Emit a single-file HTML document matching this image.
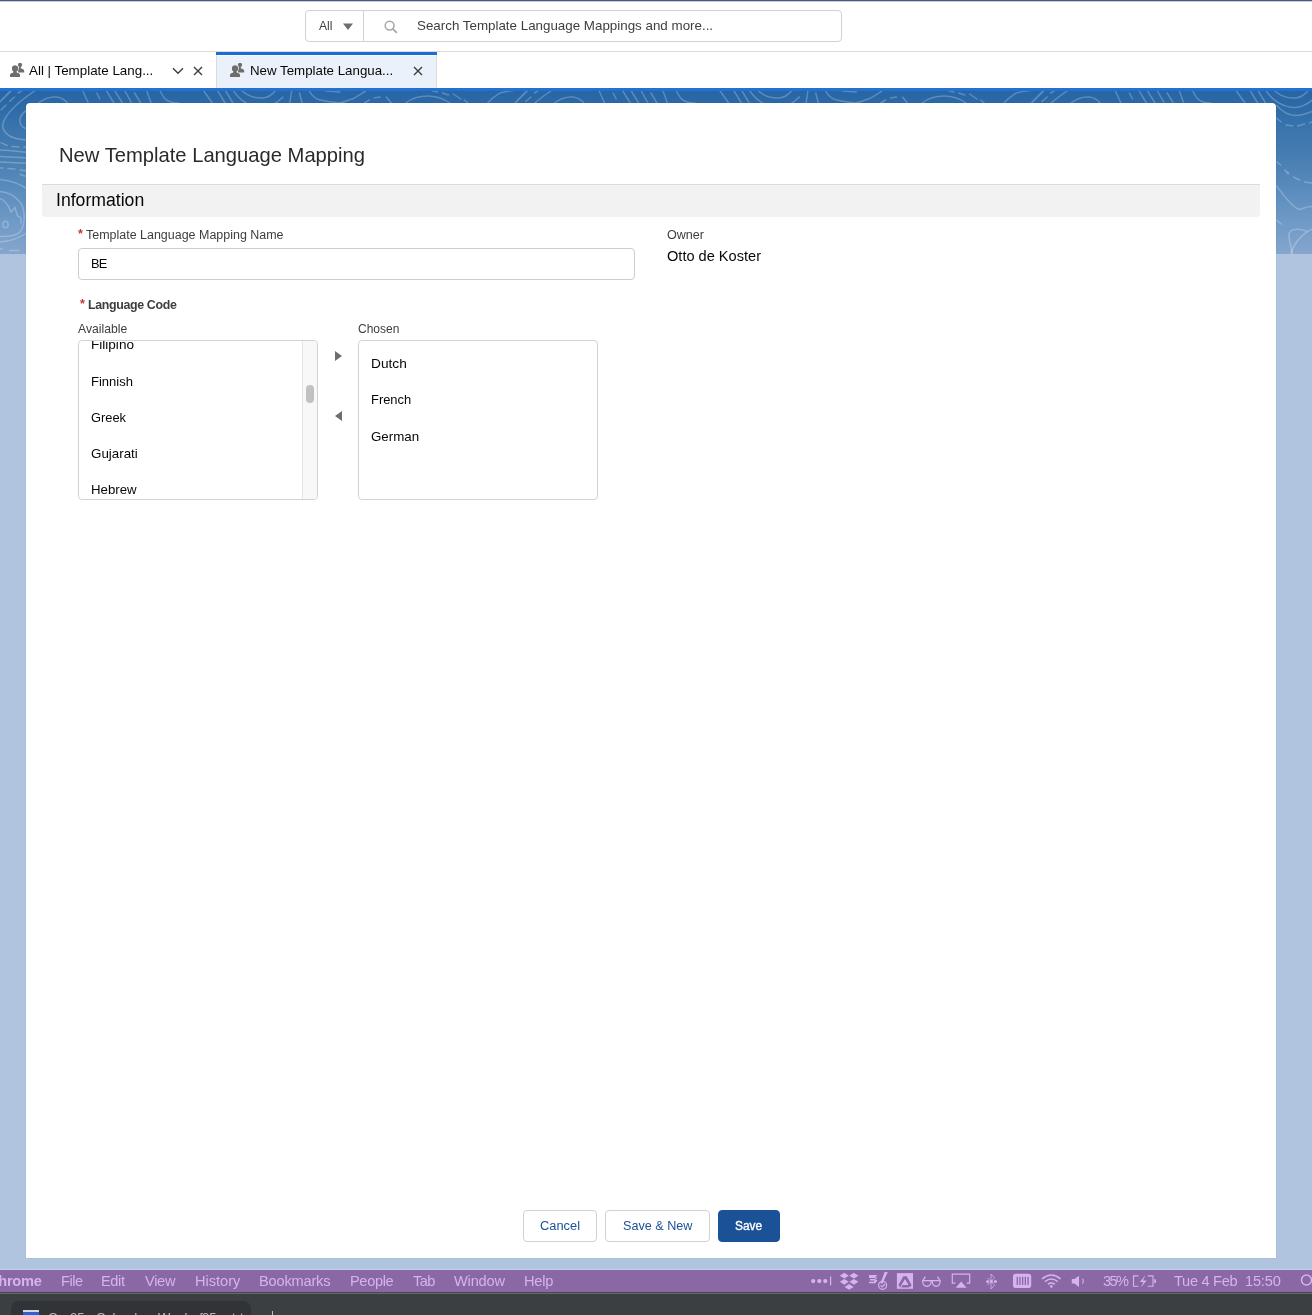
<!DOCTYPE html>
<html><head><meta charset="utf-8"><style>
*{box-sizing:border-box;margin:0;padding:0}
html,body{width:1312px;height:1315px;overflow:hidden;background:#b0c4df;font-family:"Liberation Sans",sans-serif;color:#080707}
.abs{position:absolute}
.t{position:absolute;white-space:nowrap;line-height:1;will-change:transform}
</style></head>
<body>
<div class="abs" style="left:0px;top:0px;width:1312px;height:52px;background:#fff"></div>
<div class="abs" style="left:0px;top:0px;width:1312px;height:1px;background:#4a5a84"></div>
<div class="abs" style="left:0px;top:1px;width:1312px;height:1px;background:#c8cdd9"></div>
<div class="abs" style="left:0px;top:51px;width:1312px;height:1px;background:#dddbda"></div>
<div class="abs" style="left:305px;top:10px;width:537px;height:32px;border:1px solid #d4d2d0;border-radius:4px;background:#fff"></div>
<div class="abs" style="left:363px;top:10px;width:1px;height:32px;background:#d4d2d0"></div>
<div class="t" style="left:319px;top:20px;font-size:12.06px;color:#3e3e3c;">All</div>
<svg class="abs" style="left:343px;top:23px" width="11" height="8"><path d="M0 0.6h10l-5 6.3z" fill="#706e6b"/></svg>
<svg class="abs" style="left:384px;top:20px" width="14" height="14"><circle cx="5.6" cy="5.6" r="4.4" fill="none" stroke="#a8a6a3" stroke-width="1.5"/><path d="M8.8 8.8l3.6 3.6" stroke="#a8a6a3" stroke-width="1.7" stroke-linecap="round"/></svg>
<div class="t" style="left:417px;top:19px;font-size:13.36px;color:#3e3e3c;">Search Template Language Mappings and more...</div>
<div class="abs" style="left:0px;top:52px;width:1312px;height:36px;background:#fff"></div>
<div class="abs" style="left:216px;top:52px;width:221px;height:36px;background:#eaf1fb;border-left:1px solid #dddbda;border-right:1px solid #dddbda"></div>
<div class="abs" style="left:216px;top:52px;width:221px;height:3px;background:#1b6cd3"></div>
<div class="abs" style="left:217px;top:55px;width:219px;height:1px;background:#f6f9fe"></div>
<div class="abs" style="left:0px;top:88px;width:1312px;height:3px;background:#2471d2"></div>
<svg class="abs" style="left:10px;top:63px" width="16" height="16" viewBox="0 0 16 16"><circle cx="10" cy="1.9" r="2.1" fill="#706e6b"/><path d="M9.2 3 L10.8 3 L10.9 5.6 C12.6 5.9 14.2 6.6 14.2 8 L14.2 9.5 L8 9.5 L8.3 5.7 z" fill="#706e6b"/><g stroke="#ffffff" stroke-width="1.1" style="paint-order:stroke" fill="#706e6b"><ellipse cx="5" cy="5.5" rx="3" ry="2.9"/><path d="M3.6 8 L6.4 8 L6.6 9.7 C8.6 10 10 10.9 10 12.6 L10 14.1 L0 14.1 L0 12.6 C0 10.9 1.4 10 3.4 9.7z"/></g><ellipse cx="5" cy="5.5" rx="3" ry="2.9" fill="#706e6b"/><path d="M3.6 8 L6.4 8 L6.6 9.7 C8.6 10 10 10.9 10 12.6 L10 14.1 L0 14.1 L0 12.6 C0 10.9 1.4 10 3.4 9.7z" fill="#706e6b"/></svg>
<div class="t" style="left:29px;top:64px;font-size:13.37px;color:#080707;">All | Template Lang...</div>
<svg class="abs" style="left:172px;top:67px" width="12" height="8"><path d="M1 1.2l5 5 5-5" fill="none" stroke="#3e3e3c" stroke-width="1.4"/></svg>
<svg class="abs" style="left:193px;top:66px" width="10" height="10"><path d="M1 1l8 8M9 1l-8 8" fill="none" stroke="#3e3e3c" stroke-width="1.4"/></svg>
<svg class="abs" style="left:230px;top:63px" width="16" height="16" viewBox="0 0 16 16"><circle cx="10" cy="1.9" r="2.1" fill="#706e6b"/><path d="M9.2 3 L10.8 3 L10.9 5.6 C12.6 5.9 14.2 6.6 14.2 8 L14.2 9.5 L8 9.5 L8.3 5.7 z" fill="#706e6b"/><g stroke="#eaf1fb" stroke-width="1.1" style="paint-order:stroke" fill="#706e6b"><ellipse cx="5" cy="5.5" rx="3" ry="2.9"/><path d="M3.6 8 L6.4 8 L6.6 9.7 C8.6 10 10 10.9 10 12.6 L10 14.1 L0 14.1 L0 12.6 C0 10.9 1.4 10 3.4 9.7z"/></g><ellipse cx="5" cy="5.5" rx="3" ry="2.9" fill="#706e6b"/><path d="M3.6 8 L6.4 8 L6.6 9.7 C8.6 10 10 10.9 10 12.6 L10 14.1 L0 14.1 L0 12.6 C0 10.9 1.4 10 3.4 9.7z" fill="#706e6b"/></svg>
<div class="t" style="left:250px;top:64px;font-size:13.30px;color:#080707;">New Template Langua...</div>
<svg class="abs" style="left:413px;top:66px" width="10" height="10"><path d="M1 1l8 8M9 1l-8 8" fill="none" stroke="#3e3e3c" stroke-width="1.4"/></svg>
<svg class="abs" style="left:0;top:91px" width="1312" height="163" viewBox="0 91 1312 163">
<defs><linearGradient id="bg" x1="0" y1="0" x2="0" y2="1"><stop offset="0" stop-color="#2865a4"/><stop offset="0.1" stop-color="#2d6aa8"/><stop offset="0.24" stop-color="#3a75ad"/><stop offset="0.44" stop-color="#4b80b3"/><stop offset="0.6" stop-color="#5a8cbe"/><stop offset="0.8" stop-color="#6f99c6"/><stop offset="1" stop-color="#85a6cd"/></linearGradient></defs>
<rect x="0" y="91" width="1312" height="163" fill="url(#bg)"/>
<g fill="none" stroke="rgba(255,255,255,0.24)" stroke-width="1.5" stroke-linecap="round">
<g>
<path d="M0 102L11 91 M9.5 101.5L14.5 97 M18 93L21.5 91 M-1.4 103L10.2 91 M1 110L6 105"/>
<path d="M34.6 91 C12 106 1 120 3 128 C6 137 18 140 30 140"/>
<path d="M30 108 C17 115 16 127 30 130"/>
<path d="M1 142.6L7 145.5 M12 146.5L19 147 M24 147L28 147.2"/>
<path d="M-2 150 C8 150.5 18 151.5 30 152.5 M-2 156.5 C8 157 18 157.5 30 158 M-2 162 C8 162.5 18 163 30 163.5"/>
<path d="M0 168L3 168 M8 168.5L15 169 M20 170L27 171"/>
<path d="M20 174.5L25 176"/>
<path d="M-2 179.5 C5 179.8 18 182 30 191 M30 231 C20 238 10 242 -2 242"/>
<path d="M-2 191.5 C6 191.5 14 195 20 202 C25 208 26 224 20 232 C16 236 8 237 -2 236.5"/>
<path d="M-2 198 C4 199 8 204 11 212 L15 207.5 L17.5 216 L20.5 217.5 L21.2 223"/>
<ellipse cx="5.5" cy="224.5" rx="2.7" ry="3.3"/>
<path d="M0 249L2 249 M9.5 250.5L19 250.5"/>
<path d="M38.3 103 C45 98 52 96.5 56.6 97 C61 97.5 65 100 67.6 103"/>
<path d="M82.8 91L88.3 103 M96.8 93L99.9 99 M106.6 91L113.9 103 M115 91L122.4 103 M124.9 91L131.6 103 M134.6 93L140.7 103 M146.8 91L151.1 103"/>
<path d="M160.2 91 C162 95 164 99 168 101 C171 102.5 175 103 178.5 103"/>
<path d="M203.8 91L212.3 103 M217.8 91L225.1 103 M225.7 91L233 103"/>
<path d="M242.2 91 C248 96 256 98.5 262.9 98 C268 97.5 272 95 275.1 91"/>
<path d="M233.7 91 C240 101 252 108 263 107.5 C270 107 276 104 283 97"/>
<path d="M244 105.5 C250 112 256 115.5 263 115.5 C270 115.5 276 113 283 110"/>
<path d="M244 118L248.5 122 M253.5 125L260 126 M265 126L272 124 M277 123L281 121"/>
<path d="M244.5 162L248 165 M252 170L256 173 M253 171L255.5 174 M261 177L267 180 M272 182L279 183"/>
<path d="M244 186 C250 194 260 208 266.5 209.5 C270 209 273 206 283 206.5"/>
<path d="M244 220L248.5 224"/>
<path d="M260 254 C258 244 254 234 258 231 C262 228 268 229 274 231"/>
<path d="M258 254 C261 244 268 234 283 227"/>
<path d="M291.6 91L289.8 103 M299.5 93L302 103"/>
<path d="M309.3 91 C312 96 316 99 320.2 100 C326 101.5 333 102.5 340 103 M326 91L340 92"/>
<path d="M340 103 C345 101.5 350 99.5 352.2 99 C357 97 362 93 365.6 91 M364.4 103L369.3 100 M374.1 98L380.2 97 M386.3 97L391.2 103"/>
<path d="M405.9 103 C412 98 420 96 427.8 96 C436 96 444 99 449.8 103"/>
<path d="M432.7 91L437.6 92 M442.4 93L448.5 95 M453.4 94L460.7 99 M464.4 100L468 103"/>
<path d="M487.6 103 C492 98 497 95 500 93 C505 91.5 510 91 518 90"/>
</g><g transform="translate(516.3 0)">
<path d="M0 102L11 91 M9.5 101.5L14.5 97 M18 93L21.5 91 M-1.4 103L10.2 91 M1 110L6 105"/>
<path d="M34.6 91 C12 106 1 120 3 128 C6 137 18 140 30 140"/>
<path d="M30 108 C17 115 16 127 30 130"/>
<path d="M1 142.6L7 145.5 M12 146.5L19 147 M24 147L28 147.2"/>
<path d="M-2 150 C8 150.5 18 151.5 30 152.5 M-2 156.5 C8 157 18 157.5 30 158 M-2 162 C8 162.5 18 163 30 163.5"/>
<path d="M0 168L3 168 M8 168.5L15 169 M20 170L27 171"/>
<path d="M20 174.5L25 176"/>
<path d="M-2 179.5 C5 179.8 18 182 30 191 M30 231 C20 238 10 242 -2 242"/>
<path d="M-2 191.5 C6 191.5 14 195 20 202 C25 208 26 224 20 232 C16 236 8 237 -2 236.5"/>
<path d="M-2 198 C4 199 8 204 11 212 L15 207.5 L17.5 216 L20.5 217.5 L21.2 223"/>
<ellipse cx="5.5" cy="224.5" rx="2.7" ry="3.3"/>
<path d="M0 249L2 249 M9.5 250.5L19 250.5"/>
<path d="M38.3 103 C45 98 52 96.5 56.6 97 C61 97.5 65 100 67.6 103"/>
<path d="M82.8 91L88.3 103 M96.8 93L99.9 99 M106.6 91L113.9 103 M115 91L122.4 103 M124.9 91L131.6 103 M134.6 93L140.7 103 M146.8 91L151.1 103"/>
<path d="M160.2 91 C162 95 164 99 168 101 C171 102.5 175 103 178.5 103"/>
<path d="M203.8 91L212.3 103 M217.8 91L225.1 103 M225.7 91L233 103"/>
<path d="M242.2 91 C248 96 256 98.5 262.9 98 C268 97.5 272 95 275.1 91"/>
<path d="M233.7 91 C240 101 252 108 263 107.5 C270 107 276 104 283 97"/>
<path d="M244 105.5 C250 112 256 115.5 263 115.5 C270 115.5 276 113 283 110"/>
<path d="M244 118L248.5 122 M253.5 125L260 126 M265 126L272 124 M277 123L281 121"/>
<path d="M244.5 162L248 165 M252 170L256 173 M253 171L255.5 174 M261 177L267 180 M272 182L279 183"/>
<path d="M244 186 C250 194 260 208 266.5 209.5 C270 209 273 206 283 206.5"/>
<path d="M244 220L248.5 224"/>
<path d="M260 254 C258 244 254 234 258 231 C262 228 268 229 274 231"/>
<path d="M258 254 C261 244 268 234 283 227"/>
<path d="M291.6 91L289.8 103 M299.5 93L302 103"/>
<path d="M309.3 91 C312 96 316 99 320.2 100 C326 101.5 333 102.5 340 103 M326 91L340 92"/>
<path d="M340 103 C345 101.5 350 99.5 352.2 99 C357 97 362 93 365.6 91 M364.4 103L369.3 100 M374.1 98L380.2 97 M386.3 97L391.2 103"/>
<path d="M405.9 103 C412 98 420 96 427.8 96 C436 96 444 99 449.8 103"/>
<path d="M432.7 91L437.6 92 M442.4 93L448.5 95 M453.4 94L460.7 99 M464.4 100L468 103"/>
<path d="M487.6 103 C492 98 497 95 500 93 C505 91.5 510 91 518 90"/>
</g><g transform="translate(1032.6 0)">
<path d="M0 102L11 91 M9.5 101.5L14.5 97 M18 93L21.5 91 M-1.4 103L10.2 91 M1 110L6 105"/>
<path d="M34.6 91 C12 106 1 120 3 128 C6 137 18 140 30 140"/>
<path d="M30 108 C17 115 16 127 30 130"/>
<path d="M1 142.6L7 145.5 M12 146.5L19 147 M24 147L28 147.2"/>
<path d="M-2 150 C8 150.5 18 151.5 30 152.5 M-2 156.5 C8 157 18 157.5 30 158 M-2 162 C8 162.5 18 163 30 163.5"/>
<path d="M0 168L3 168 M8 168.5L15 169 M20 170L27 171"/>
<path d="M20 174.5L25 176"/>
<path d="M-2 179.5 C5 179.8 18 182 30 191 M30 231 C20 238 10 242 -2 242"/>
<path d="M-2 191.5 C6 191.5 14 195 20 202 C25 208 26 224 20 232 C16 236 8 237 -2 236.5"/>
<path d="M-2 198 C4 199 8 204 11 212 L15 207.5 L17.5 216 L20.5 217.5 L21.2 223"/>
<ellipse cx="5.5" cy="224.5" rx="2.7" ry="3.3"/>
<path d="M0 249L2 249 M9.5 250.5L19 250.5"/>
<path d="M38.3 103 C45 98 52 96.5 56.6 97 C61 97.5 65 100 67.6 103"/>
<path d="M82.8 91L88.3 103 M96.8 93L99.9 99 M106.6 91L113.9 103 M115 91L122.4 103 M124.9 91L131.6 103 M134.6 93L140.7 103 M146.8 91L151.1 103"/>
<path d="M160.2 91 C162 95 164 99 168 101 C171 102.5 175 103 178.5 103"/>
<path d="M203.8 91L212.3 103 M217.8 91L225.1 103 M225.7 91L233 103"/>
<path d="M242.2 91 C248 96 256 98.5 262.9 98 C268 97.5 272 95 275.1 91"/>
<path d="M233.7 91 C240 101 252 108 263 107.5 C270 107 276 104 283 97"/>
<path d="M244 105.5 C250 112 256 115.5 263 115.5 C270 115.5 276 113 283 110"/>
<path d="M244 118L248.5 122 M253.5 125L260 126 M265 126L272 124 M277 123L281 121"/>
<path d="M244.5 162L248 165 M252 170L256 173 M253 171L255.5 174 M261 177L267 180 M272 182L279 183"/>
<path d="M244 186 C250 194 260 208 266.5 209.5 C270 209 273 206 283 206.5"/>
<path d="M244 220L248.5 224"/>
<path d="M260 254 C258 244 254 234 258 231 C262 228 268 229 274 231"/>
<path d="M258 254 C261 244 268 234 283 227"/>
<path d="M291.6 91L289.8 103 M299.5 93L302 103"/>
<path d="M309.3 91 C312 96 316 99 320.2 100 C326 101.5 333 102.5 340 103 M326 91L340 92"/>
<path d="M340 103 C345 101.5 350 99.5 352.2 99 C357 97 362 93 365.6 91 M364.4 103L369.3 100 M374.1 98L380.2 97 M386.3 97L391.2 103"/>
<path d="M405.9 103 C412 98 420 96 427.8 96 C436 96 444 99 449.8 103"/>
<path d="M432.7 91L437.6 92 M442.4 93L448.5 95 M453.4 94L460.7 99 M464.4 100L468 103"/>
<path d="M487.6 103 C492 98 497 95 500 93 C505 91.5 510 91 518 90"/>
</g>
</g></svg>
<div class="abs" style="left:26px;top:103px;width:1250px;height:1155px;background:#fff;border-radius:4px 4px 0 0;box-shadow:0 0 1px rgba(10,40,90,.35)"></div>
<div class="t" style="left:59px;top:145px;font-size:20.19px;color:#2a2a2a;">New Template Language Mapping</div>
<div class="abs" style="left:42px;top:184px;width:1218px;height:1px;background:#dddbda"></div>
<div class="abs" style="left:42px;top:185px;width:1218px;height:32px;background:#f3f2f2;border-radius:0 0 4px 4px"></div>
<div class="t" style="left:56px;top:192px;font-size:17.65px;color:#080707;">Information</div>
<div class="t" style="left:78px;top:228px;font-size:12.50px;font-weight:700;color:#c23934;">*</div>
<div class="t" style="left:86px;top:229px;font-size:12.47px;color:#3e3e3c;">Template Language Mapping Name</div>
<div class="abs" style="left:78px;top:248px;width:557px;height:32px;border:1px solid #cfcdcb;border-radius:4px;background:#fff"></div>
<div class="t" style="left:91px;top:258px;font-size:12.80px;letter-spacing:-0.738px;color:#080707;">BE</div>
<div class="t" style="left:667px;top:229px;font-size:12.56px;color:#3e3e3c;">Owner</div>
<div class="t" style="left:667px;top:249px;font-size:14.58px;color:#080707;">Otto de Koster</div>
<div class="t" style="left:80px;top:298px;font-size:12.50px;font-weight:700;color:#c23934;">*</div>
<div class="t" style="left:88px;top:299px;font-size:12.40px;font-weight:700;letter-spacing:-0.347px;color:#3e3e3c;">Language Code</div>
<div class="t" style="left:78px;top:323px;font-size:12.18px;color:#3e3e3c;">Available</div>
<div class="t" style="left:358px;top:323px;font-size:12.01px;color:#3e3e3c;">Chosen</div>
<div class="abs" style="left:78px;top:340px;width:240px;height:160px;border:1px solid #d4d2d0;border-radius:4px;background:#fff;overflow:hidden"><div class="t" style="left:12px;top:-3px;font-size:13.57px;color:#080707;">Filipino</div>
<div class="t" style="left:12px;top:34px;font-size:13.03px;color:#080707;">Finnish</div>
<div class="t" style="left:12px;top:71px;font-size:12.85px;color:#080707;">Greek</div>
<div class="t" style="left:12px;top:106px;font-size:13.37px;color:#080707;">Gujarati</div>
<div class="t" style="left:12px;top:142px;font-size:13.26px;color:#080707;">Hebrew</div>
<div class="abs" style="left:223px;top:0;width:15px;height:158px;background:#f8f8f8;border-left:1px solid #e5e5e5"></div><div class="abs" style="left:227px;top:44px;width:8px;height:18px;background:#c1c1c1;border-radius:4px"></div></div>
<svg class="abs" style="left:334px;top:350px" width="9" height="12"><path d="M1 1v10l7-5z" fill="#706e6b"/></svg>
<svg class="abs" style="left:334px;top:410px" width="9" height="12"><path d="M8 1v10l-7-5z" fill="#706e6b"/></svg>
<div class="abs" style="left:358px;top:340px;width:240px;height:160px;border:1px solid #d4d2d0;border-radius:4px;background:#fff;overflow:hidden"><div class="t" style="left:12px;top:16px;font-size:13.70px;color:#080707;">Dutch</div>
<div class="t" style="left:12px;top:53px;font-size:12.92px;color:#080707;">French</div>
<div class="t" style="left:12px;top:89px;font-size:13.34px;color:#080707;">German</div>
</div>
<div class="abs" style="left:523px;top:1210px;width:74px;height:32px;border:1px solid #d4d2d0;border-radius:4px;background:#fff"></div>
<div class="t" style="left:540px;top:1220px;font-size:12.85px;color:#1b5297;">Cancel</div>
<div class="abs" style="left:605px;top:1210px;width:105px;height:32px;border:1px solid #d4d2d0;border-radius:4px;background:#fff"></div>
<div class="t" style="left:623px;top:1220px;font-size:12.63px;color:#1b5297;">Save &amp; New</div>
<div class="abs" style="left:718px;top:1210px;width:62px;height:32px;border:1px solid #1b5297;border-radius:4px;background:#1b5297"></div>
<div class="t" style="left:735px;top:1221px;font-size:11.93px;color:#fff;-webkit-text-stroke:0.35px #fff;">Save</div>
<div class="abs" style="left:0px;top:1269px;width:1312px;height:1px;background:#bcd0e6"></div>
<div class="abs" style="left:0px;top:1270px;width:1312px;height:22px;background:#8a68a6"></div>
<div class="abs" style="left:0px;top:1292px;width:1312px;height:1px;background:#4b4352"></div>
<div class="abs" style="left:0px;top:1293px;width:1312px;height:1px;background:#68696b"></div>
<div class="abs" style="left:0px;top:1294px;width:1312px;height:21px;background:#3c3f42"></div>
<div class="abs" style="left:11px;top:1301px;width:240px;height:20px;background:#313336;border-radius:8px 8px 0 0"></div>
<div class="abs" style="left:23px;top:1310px;width:16px;height:8px;background:#2f5fd0;border-top:2px solid #cfd6e6"></div>
<div class="t" style="left:-12px;top:1274px;font-size:14.60px;font-weight:700;letter-spacing:-0.277px;color:#d6b3ec;">Chrome</div>
<div class="t" style="left:61px;top:1274px;font-size:14.60px;letter-spacing:-0.482px;color:#d6b3ec;">File</div>
<div class="t" style="left:101px;top:1274px;font-size:14.60px;letter-spacing:-0.390px;color:#d6b3ec;">Edit</div>
<div class="t" style="left:145px;top:1274px;font-size:14.60px;letter-spacing:-0.296px;color:#d6b3ec;">View</div>
<div class="t" style="left:195px;top:1274px;font-size:14.60px;letter-spacing:-0.004px;color:#d6b3ec;">History</div>
<div class="t" style="left:259px;top:1274px;font-size:14.60px;letter-spacing:-0.192px;color:#d6b3ec;">Bookmarks</div>
<div class="t" style="left:350px;top:1274px;font-size:14.60px;letter-spacing:-0.361px;color:#d6b3ec;">People</div>
<div class="t" style="left:413px;top:1274px;font-size:14.60px;letter-spacing:-0.613px;color:#d6b3ec;">Tab</div>
<div class="t" style="left:454px;top:1274px;font-size:14.60px;letter-spacing:-0.171px;color:#d6b3ec;">Window</div>
<div class="t" style="left:524px;top:1274px;font-size:14.60px;letter-spacing:-0.257px;color:#d6b3ec;">Help</div>
<div class="t" style="left:1103px;top:1274px;font-size:14.60px;letter-spacing:-1.641px;color:#d6b3ec;">35%</div>
<div class="t" style="left:1174px;top:1274px;font-size:14.60px;letter-spacing:-0.290px;color:#d6b3ec;">Tue 4 Feb</div>
<div class="t" style="left:1245px;top:1274px;font-size:14.60px;letter-spacing:-0.187px;color:#d6b3ec;">15:50</div>
<svg class="abs" style="left:800px;top:1270px" width="512" height="22" viewBox="800 1270 512 22">
<g fill="#d6b3ec" stroke="none">
<circle cx="813.2" cy="1281.1" r="2.1"/><circle cx="819.3" cy="1281.1" r="2.1"/><circle cx="825.3" cy="1281.1" r="2.1"/><rect x="830" y="1276.4" width="1.2" height="9"/>
<path d="M844.3 1272.8l4.5 2.9-4.5 2.9-4.5-2.9z M853.9 1272.8l4.5 2.9-4.5 2.9-4.5-2.9z M844.3 1278.9l4.5 2.9-4.5 2.9-4.5-2.9z M853.9 1278.9l4.5 2.9-4.5 2.9-4.5-2.9z M849.1 1284l4.5 2.9-4.5 2.9-4.5-2.9z"/>
<path d="M869 1275h8.5l-2.5 2.6h2.5l-2.2 2.4h2.2l-2 3.3h-6.5v-1.6h4.8l1-1.2h-4.8v-1.5h4.8l1-1h-6.8z"/>
<path d="M884.6 1272h3.2l-5.3 11.5h-2.1z"/>
<rect x="896.9" y="1273.1" width="16.1" height="15.7"/>
<path d="M955.8 1287.7h10.7l-5.35-6.2z"/>
<rect x="1013" y="1273.7" width="18.2" height="14.3" rx="2.8"/>
<path d="M1071.8 1279h2.6l4.6-3.3v11.2l-4.6-3.3h-2.6z"/>
<circle cx="1051.3" cy="1286.4" r="1.3"/>
<circle cx="987.6" cy="1281.5" r="1.5"/><circle cx="991.5" cy="1281.5" r="1.5"/><circle cx="995.4" cy="1281.5" r="1.5"/>
<path d="M1154.2 1279.3h0.8c0.6 0 1 .5 1 1.2v1.4c0 .7-.4 1.2-1 1.2h-0.8z"/>
<path d="M1145.4 1275.3l-5.6 6.8h3.6l-2.6 5.3 5.8-7h-3.6z"/>
</g>
<g fill="none" stroke="#d6b3ec" stroke-width="1.2">
<circle cx="882.6" cy="1285.3" r="4"/>
<path d="M880.5 1285.4l1.6 1.6 2.8-3" stroke-width="1.1"/>
<path d="M922.6 1280.6h8.6c0 4-1.6 5.8-4.3 5.8s-4.3-1.8-4.3-5.8z M932.2 1280.6h8c0 4-1.5 5.8-4 5.8s-4-1.8-4-5.8z M931.2 1281h1 M922.8 1280.6l2.6-4 M940 1280.6l-2.6-4"/>
<path d="M955.3 1283.2h-3v-9h17.4v9h-3"/>
<path d="M991 1274v15l3.6-3.8-7.2-7.4 M991 1289" stroke-width="0.8"/>
<path d="M991 1274l3.6 3.8-7.2 7.4" stroke-width="0.8"/>
<path d="M1042 1278.8q9.3-7.6 18.6 0 M1044.9 1281.6q6.4-5 12.8 0 M1047.8 1284.3q3.5-2.6 7 0" stroke-width="1.5"/>
<path d="M1082.6 1278.6q1.6 2.6 0 5.2" stroke-width="1.1"/>
<path d="M1138.5 1275.9h-5v10.4h5 M1147.8 1275.9h5.2v10.4h-5.2" stroke-width="1.1"/>
</g>
<g fill="#8a68a6">
<rect x="1016.6" y="1276.8" width="1.3" height="8.1"/><rect x="1019.3" y="1276.8" width="1.3" height="8.1"/><rect x="1022" y="1276.8" width="1.3" height="8.1"/><rect x="1024.7" y="1276.8" width="1.3" height="8.1"/><rect x="1027.4" y="1276.8" width="1.3" height="8.1"/>
<path d="M903.4 1276.3h3.2l5 8.6-1.6 2.7-5-8.6-5 8.6-1.6-2.7z M902.6 1285.1h7.6l-1.5 2.5h-7.6z"/>
</g>
<path d="M905 1280.1l2.9 5h-5.8z" fill="#d6b3ec"/>
<g fill="none" stroke="#d6b3ec" stroke-width="1.5"><circle cx="1306.5" cy="1280" r="5"/></g>
</svg>
<div class="t" style="left:48px;top:1311px;font-size:13.00px;color:#b9babb;">O</div>
<div class="t" style="left:70px;top:1311px;font-size:13.00px;color:#b9babb;">25</div>
<div class="t" style="left:96px;top:1311px;font-size:13.00px;color:#b9babb;">Calendar</div>
<div class="t" style="left:158px;top:1311px;font-size:13.00px;color:#b9babb;">Week</div>
<div class="t" style="left:192px;top:1311px;font-size:13.00px;color:#b9babb;">of</div>
<div class="t" style="left:202px;top:1311px;font-size:13.00px;color:#b9babb;">25</div>
<div class="t" style="left:232px;top:1311px;font-size:13.00px;color:#b9babb;">t</div>
<div class="t" style="left:240px;top:1311px;font-size:13.00px;color:#b9babb;">t</div>
<div class="abs" style="left:272px;top:1311px;width:1px;height:4px;background:#bdbfc1"></div>
</body></html>
